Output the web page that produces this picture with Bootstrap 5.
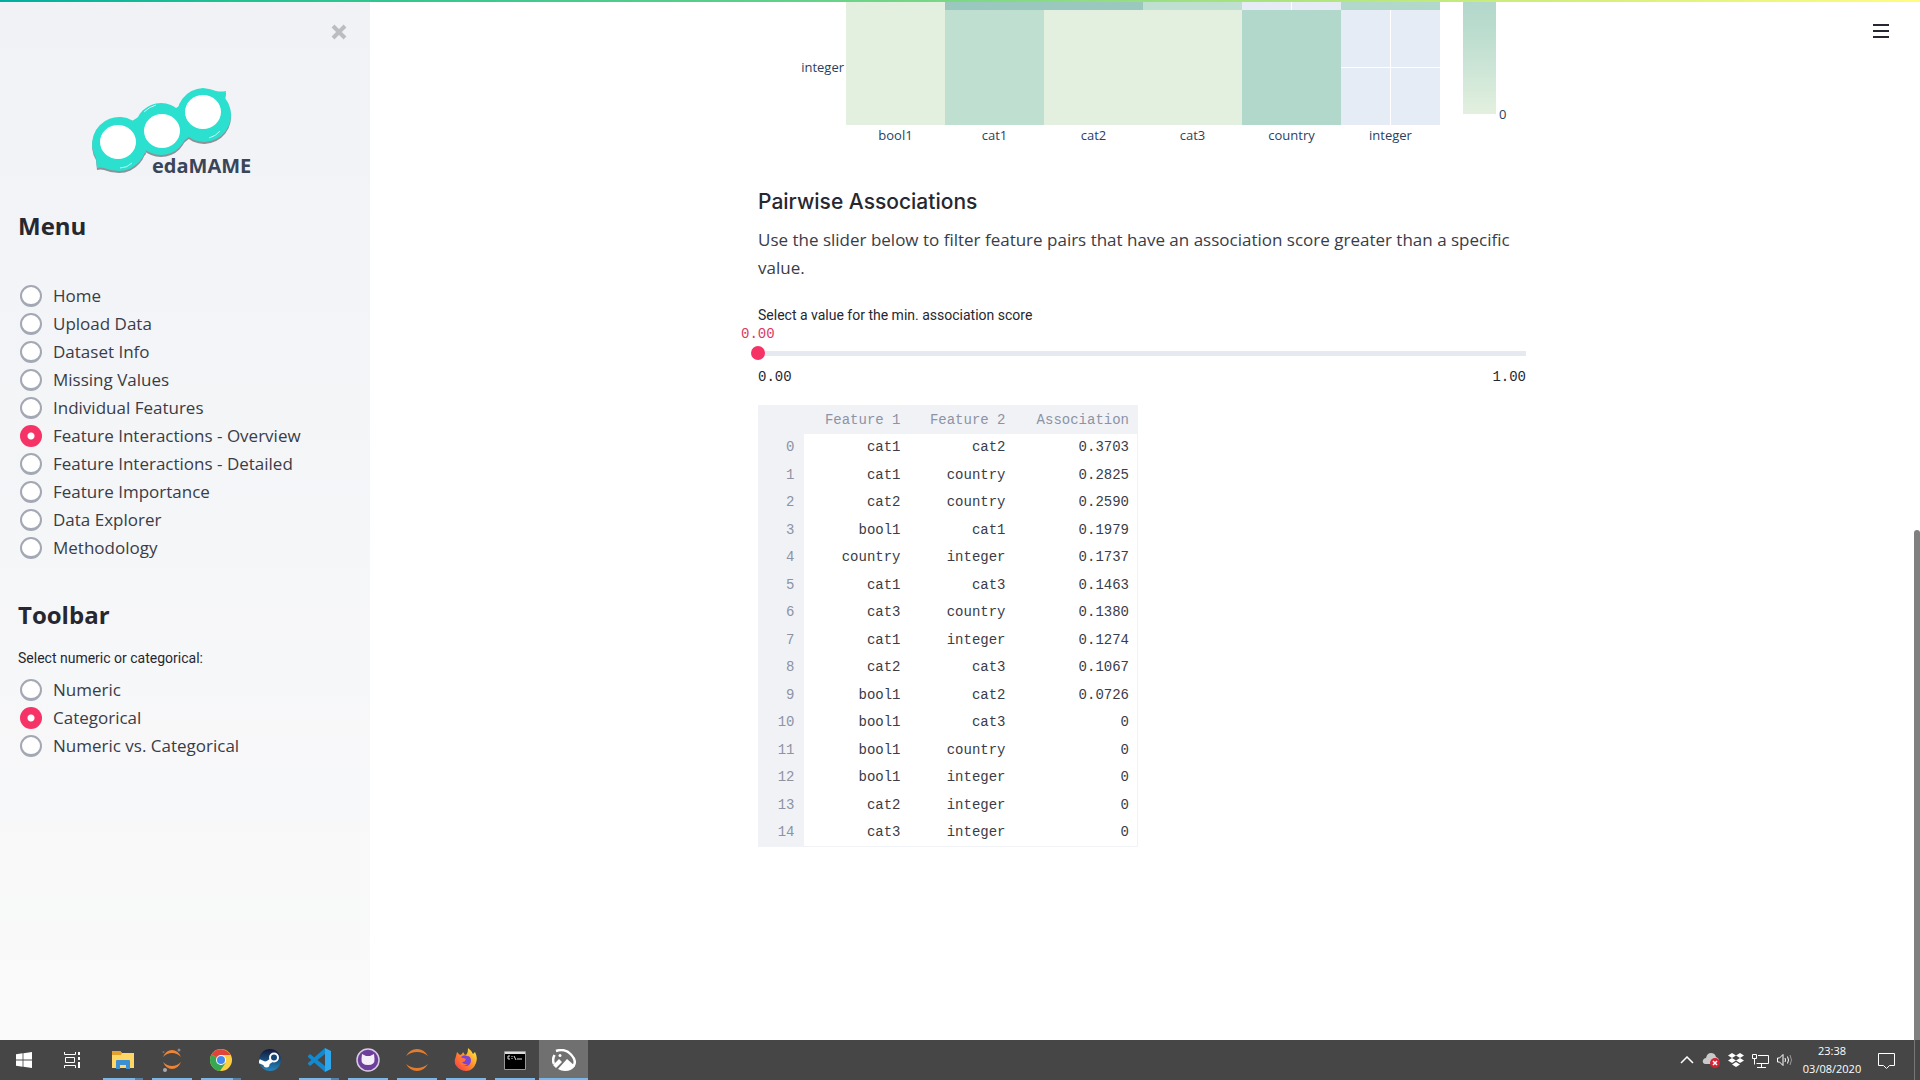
<!DOCTYPE html>
<html lang="en">
<head>
<meta charset="utf-8">
<meta name="viewport" content="width=device-width, initial-scale=1">
<title>edaMAME - Feature Interactions</title>
<link href="https://cdn.jsdelivr.net/npm/bootstrap@5.3.0/dist/css/bootstrap.min.css" rel="stylesheet">
<style>
  :root { --ink: #262730; --soft-ink: #3a3c47; --pink: #f63366; --muted: #8d92a5; --panel: #f0f2f6; }
  body { font-family: "Open Sans", "Noto Sans", sans-serif; font-size: 17px; line-height: 28px; color: var(--ink); background: #fff; }
  .rainbow { height: 2px; z-index: 5; background: linear-gradient(to right, #00aea0, #21c191 12%, #5fd08a 40%, #a5e27f 64%, #d9f17c 84%, #fffd80); }

  /* sidebar */
  .side { width: 370px; background: linear-gradient(#f0f2f6, #fafafa); padding: 24px 18px; }
  .side h1 { font-size: 24px; line-height: 32px; font-weight: 700; }
  .side-close { width: 16px; height: 16px; margin-right: 5px; }
  .logo { width: 160px; height: 88px; margin: 48px 0 34px 74px; }
  .tick-list { padding-left: 2px; }
  .tick-list label { color: var(--soft-ink); padding-left: 11px; }
  .tick { appearance: none; width: 22px; height: 22px; border-radius: 50%; background: #fff; border: 2px solid #a3a8b4; border-bottom-width: 3px; flex: none; }
  .tick:checked { border: 0; background: radial-gradient(circle, #fff 3px, var(--pink) 4px); }
  .note-label { font-family: Roboto, "Open Sans", sans-serif; font-size: 14px; line-height: 20px; }
  #pages { margin-top: 40px; }
  .tool-head { margin: 37px 0 17px; }
  #kinds { margin-top: 8px; }

  /* page column */
  .col-main { max-width: 768px; }
  .chart { font-size: 13px; line-height: 20px; color: #2a3f5f; }
  .chart-y { width: 88px; padding: 57px 2px 0 0; }
  .heat { display: grid; grid-template-columns: repeat(6, 1fr); grid-template-rows: 10px 115px; }
  .v0 { background: #e3f0df; }
  .v1 { background: #bfdfd0; }
  .v2 { background: #b2d7cb; }
  .v3 { background: #9ac8bf; }
  .vn { background: linear-gradient(#fff, #fff) center / 1px 100% no-repeat #e5ecf6; }
  .vx { background: linear-gradient(#fff, #fff) center / 1px 100% no-repeat, linear-gradient(#fff, #fff) center / 100% 1px no-repeat #e5ecf6; }
  .scale { width: 33px; height: 114px; margin-left: 23px; background: linear-gradient(#b2d7cb, #bcddcf 30%, #e3f0df); }
  .scale-zero { width: 30px; padding: 104px 0 0 3px; }
  .col-main h3 { font-family: Inter, "Open Sans", sans-serif; font-size: 21px; line-height: 28px; font-weight: 500; }
  .pair-head { margin: 43px 0 10px; }
  .pair-text { margin: 0 0 23px; color: var(--soft-ink); }
  .limits { margin: 4px 0 18px; }
  .code-text { font-family: "Liberation Mono", monospace; font-size: 14px; line-height: 20px; }
  .thumb-value { color: #d83a63; margin-left: -17px; line-height: 18px; }
  .slide { appearance: none; display: block; height: 20px; width: calc(100% + 14px); margin: 0 -7px;
    background: linear-gradient(#e6eaf0, #e6eaf0) center / calc(100% - 14px) 5px no-repeat; }
  .slide::-webkit-slider-thumb { appearance: none; width: 14px; height: 14px; border-radius: 50%; background: var(--pink); }
  .frame-table { width: 380px; height: 442px; table-layout: fixed; text-align: right; border: 1px solid var(--panel); }
  .frame-table thead tr { height: 28px; }
  .frame-table th, .frame-table td { padding: 0 9px; font-weight: 400; }
  .frame-table th { background: var(--panel); color: var(--muted); }
  .frame-table td { color: var(--soft-ink); }
  .frame-table th:last-child, .frame-table td:last-child { padding-right: 8px; }
  .menu-btn { width: 16px; top: 23px; right: 25px; }
  .menu-btn svg { display: block; }
  .rail { width: 6px; }
  .rail div { height: 49%; border-radius: 3px 3px 0 0; background: #808080; }

  /* taskbar */
  .taskbar { height: 40px; background: #464646; }
  .task { width: 49px; padding: 0; border: 0; background: none; display: flex; align-items: center; justify-content: center; }
  .task.sys { width: 48px; }
  .pinned { margin-left: 2px; }
  .task.run { background: linear-gradient(#76b9ed, #76b9ed) bottom center / 40px 2px no-repeat; }
  .task.many { background: linear-gradient(to right, #76b9ed 80%, #5583a8 80%) bottom center / 40px 2px no-repeat; }
  .task.now { background: linear-gradient(#76b9ed, #76b9ed) bottom / 100% 2px no-repeat #707070; }
  .clock { font-size: 11px; line-height: 18px; color: #fff; text-align: center; width: 60px; }
  .tray svg { flex: none; }
  .peek { width: 6px; border-left: 1px solid #777; margin-left: 11px; }
</style>
</head>
<body class="vh-100 d-flex flex-column overflow-hidden">
<div class="rainbow fixed-top"></div>
<div class="d-flex flex-grow-1 overflow-hidden">
  <aside class="side flex-shrink-0">
    <div class="d-flex justify-content-end">
      <button class="side-close p-0 border-0 bg-transparent d-flex" aria-label="Close sidebar"><svg width="16" height="16" viewBox="0 0 16 16"><path d="M2 2l12 12M14 2L2 14" stroke="#bcbdc1" stroke-width="4"/></svg></button>
    </div>
    <svg class="logo d-block overflow-visible" viewBox="92 88 160 88">
      <defs><g id="pod">
        <path d="M97 168L96 158A27 27 0 1 1 119 171Q111 171 104 168Q100 167 97 168z"/>
        <circle cx="161" cy="129" r="26"/>
        <path d="M226 91L225 98A27 27 0 1 1 203 88Q211 89 216 91Q221 92 226 91z"/>
        <path d="M132 121L140 116L146 152L138 160zM176 108L184 103L190 136L180 144z"/>
      </g></defs>
      <use href="#pod" fill="#8d9299" y="2"/>
      <use href="#pod" fill="#2be0cf"/>
      <g fill="#fff"><ellipse cx="118" cy="142" rx="18" ry="17"/><ellipse cx="162" cy="131" rx="18" ry="17"/><ellipse cx="203" cy="112" rx="18" ry="17"/></g>
      <path d="M144 112Q149 107 156 105M120 168Q127 168 132 163M209 138Q216 136 220 131" fill="none" stroke="#c9fbf4" stroke-width="1"/>
      <text x="152" y="173" font-family="Open Sans, sans-serif" font-weight="700" font-size="20" fill="#3a4558">edaMAME</text>
    </svg>
    <h1 class="mb-0">Menu</h1>
    <div class="tick-list" role="radiogroup" aria-label="Menu" id="pages"></div>
    <h1 class="tool-head">Toolbar</h1>
    <div class="note-label" id="kindLabel">Select numeric or categorical:</div>
    <div class="tick-list" role="radiogroup" aria-labelledby="kindLabel" id="kinds"></div>
  </aside>

  <main class="flex-grow-1 position-relative overflow-hidden">
    <div class="col-main mx-auto">
      <div class="chart d-flex">
        <div class="chart-y text-end">integer</div>
        <div class="flex-grow-1">
          <div class="heat">
            <div class="v0"></div><div class="v3"></div><div class="v3"></div><div class="v1"></div><div class="vn"></div><div class="v2"></div>
            <div class="v0"></div><div class="v1"></div><div class="v0"></div><div class="v0"></div><div class="v2"></div><div class="vx"></div>
          </div>
          <div class="d-flex text-center">
            <div class="w-100">bool1</div><div class="w-100">cat1</div><div class="w-100">cat2</div><div class="w-100">cat3</div><div class="w-100">country</div><div class="w-100">integer</div>
          </div>
        </div>
        <div class="scale"></div>
        <div class="scale-zero">0</div>
      </div>
      <h3 class="pair-head">Pairwise Associations</h3>
      <p class="pair-text">Use the slider below to filter feature pairs that have an association score greater than a specific value.</p>
      <label class="note-label d-block" for="minScore">Select a value for the min. association score</label>
      <div class="thumb-value code-text">0.00</div>
      <input class="slide" type="range" id="minScore" min="0" max="1" step="0.01" value="0">
      <div class="limits code-text d-flex justify-content-between"><span>0.00</span><span>1.00</span></div>
      <table class="frame-table code-text">
        <colgroup><col style="width:45px"><col style="width:106px"><col style="width:105px"><col></colgroup>
        <thead><tr><th></th><th scope="col">Feature 1</th><th scope="col">Feature 2</th><th scope="col">Association</th></tr></thead>
        <tbody id="pairs"></tbody>
      </table>
    </div>
    <button class="menu-btn position-absolute p-0 border-0 bg-transparent" aria-label="Main menu"><svg width="16" height="16" viewBox="0 0 16 16"><path d="M0 2h16M0 8h16M0 14h16" stroke="#262730" stroke-width="2"/></svg></button>
  </main>
  <div class="rail d-flex flex-column justify-content-end"><div></div></div>
</div>

<footer class="taskbar flex-shrink-0 d-flex">
  <button class="task sys" aria-label="Start"><svg width="16" height="16" viewBox="0 0 16 16" fill="#fff"><path d="M0 2.300L6.600 1.300V7.500H0zM7.400 1.200L16 0V7.500H7.400zM0 8.400H6.600V14.700L0 13.700zM7.400 8.400H16V16L7.400 14.800z"/></svg></button>
  <button class="task sys" aria-label="Task view"><svg width="17" height="16" viewBox="0 0 17 16" fill="none" stroke="#fff"><path d="M.5 0v2.500h11V0M.5 16v-2.500h11V16M1.500 5.500h9v5h-9z"/><path d="M15 0v3M15 5v3M15 10v6" stroke-width="2"/></svg></button>
  <div class="pinned d-flex">
    <button class="task many" aria-label="File Explorer"><svg width="22" height="20" viewBox="0 0 22 20"><path d="M0 1h8l2 2h12v15H0z" fill="#ffd766"/><path d="M0 1h8l2 2-1 2H0z" fill="#e4a12e"/><path d="M4 19v-8q0-1 1-1h12q1 0 1 1v8h-4v-4H8v4z" fill="#3c8fd1"/></svg></button>
    <button class="task run" aria-label="Jupyter Notebook"><svg width="20" height="24" viewBox="0 0 20 24"><path d="M1 9Q4 2 10 2t9 7q-4-4-9-4T1 9zM1 14q3 7 9 7t9-7q-4 4-9 4t-9-4z" fill="#ee8434"/><circle cx="17" cy="2" r="1.500" fill="#888"/><circle cx="3" cy="22" r="2" fill="#aaa"/><circle cx="1.500" cy="4" r="1" fill="#777"/></svg></button>
    <button class="task many" aria-label="Chrome"><svg width="22" height="22" viewBox="0 0 22 22"><circle cx="11" cy="11" r="11" fill="#fbcf3f"/><path d="M11 11L1.500 5.500A11 11 0 0 0 10 22L15.500 14z" fill="#36a852"/><path d="M11 11L1.500 5.500A11 11 0 0 1 20.500 6H11z" fill="#e0453a"/><circle cx="11" cy="11" r="5" fill="#fff"/><circle cx="11" cy="11" r="4" fill="#4688f1"/></svg></button>
    <button class="task" aria-label="Steam"><svg width="22" height="22" viewBox="0 0 22 22"><defs><linearGradient id="steam" x2="0" y2="1"><stop stop-color="#11183a"/><stop offset="1" stop-color="#2386c0"/></linearGradient></defs><circle cx="11" cy="11" r="11" fill="url(#steam)"/><path d="M0 12l7 3 6-4" fill="none" stroke="#fff" stroke-width="4"/><circle cx="7.500" cy="15.500" r="3" fill="#fff"/><circle cx="15" cy="8.500" r="4" fill="#174575" stroke="#fff" stroke-width="2"/></svg></button>
    <button class="task many" aria-label="Visual Studio Code"><svg width="24" height="24" viewBox="0 0 24 24"><path d="M18 0l6 3v18l-6 3z" fill="#2fa8ee"/><path d="M1 8l2-2 15 12v6L1 9z" fill="#1389cf"/><path d="M1 16l2 2L18 6V0L1 15z" fill="#1389cf"/></svg></button>
    <button class="task run" aria-label="GitHub Desktop"><svg width="24" height="24" viewBox="0 0 24 24"><circle cx="12" cy="12" r="11" fill="#6e3f9a" stroke="#d8cbe6" stroke-width="1.500"/><path d="M6 6l4 2h4l4-2 .5 5q.5 6-6.500 6t-6.500-6z" fill="#f4eef9"/></svg></button>
    <button class="task run" aria-label="Jupyter Lab"><svg width="22" height="24" viewBox="0 0 22 24"><path d="M0 8Q4 1 11 1t11 7q-5-4-11-4T0 8zM0 16q4 7 11 7t11-7q-5 4-11 4T0 16z" fill="#e47b2d"/></svg></button>
    <button class="task run" aria-label="Firefox"><svg width="24" height="24" viewBox="0 0 24 24"><defs><linearGradient id="fox" x1="1" x2="0" y2="1"><stop offset=".1" stop-color="#ffe53b"/><stop offset=".5" stop-color="#ff8a2a"/><stop offset="1" stop-color="#f8304f"/></linearGradient></defs><path d="M2 8l1-4 3 3 2-1 1-2 2 3q3 0 3-7 4 3 5 6l2-2q3 6 1 11-3 8-10 8T1 16q-1-4 1-8z" fill="url(#fox)"/><path d="M7 9q3-3 6-1 4 0 4 5-1 5-5 5t-5-4l4-1z" fill="#7a45d6"/><path d="M5 10q3-1 7 1-1 3-4 3 2 3 6 2-5 4-8-1z" fill="#ff7139"/></svg></button>
    <button class="task run" aria-label="Command Prompt"><svg width="22" height="19" viewBox="0 0 22 19"><path d="M.5.5h21v18H.5z" fill="#000" stroke="#999"/><path d="M1 2h20" stroke="#ddd" stroke-width="2"/><path d="M6 5H4v3h2M8 5v1M8 7v1M10 5l2 4M13 8h5" stroke="#ddd" fill="none"/></svg></button>
    <button class="task now" aria-label="Photos"><svg width="24" height="22" viewBox="0 0 24 22"><path d="M4 2Q13-1 19 5.500T21.500 17M2.500 6Q0 11 2 15" fill="none" stroke="#fff" stroke-width="2.500"/><path d="M1 16l6-6 3 3-6 6zM6 20l9-10 8 7q-3 5-10 5-4 0-7-2z" fill="#fff"/><circle cx="8" cy="6.500" r="1.500" fill="#fff"/></svg></button>
  </div>

  <div class="tray d-flex align-items-center ms-auto gap-2">
    <svg width="14" height="8" viewBox="0 0 14 8"><path d="M1 7l6-6 6 6" fill="none" stroke="#fff" stroke-width="1.500"/></svg>
    <svg width="18" height="16" viewBox="0 0 18 16"><path d="M3 12q-3-1-2-4 1-2 3-2 1-5 5-5 4 0 5 4 3 1 3 4v3z" fill="#c9c9c9"/><circle cx="13" cy="11" r="5" fill="#d42333"/><path d="M11 9l4 4M15 9l-4 4" stroke="#fff" stroke-width="1.500"/></svg>
    <svg width="16" height="15" viewBox="0 0 16 15" fill="#fff"><path d="M4 0l4 2.500L4 5 0 2.500zM12 0l4 2.500L12 5 8 2.500zM4 5l4 2.500L4 10 0 7.500zM12 5l4 2.500L12 10 8 7.500zM8 9l4 2.500L8 14l-4-2.500z"/></svg>
    <svg width="17" height="15" viewBox="0 0 17 15" fill="none" stroke="#fff"><path d="M6 2.500h10.500v8H4.500M9.500 11v3M5 14.500h9M.5 1.500h4v4h-4zM2.500 5.500v6"/></svg>
    <svg width="17" height="14" viewBox="0 0 17 14" fill="none" stroke="#fff"><path d="M.5 5h2L6 1.500v11L2.500 9h-2zM8 5q1 2 0 4M10.500 3.500q2 3.500 0 7"/><path d="M13 2q3 5 0 10" stroke="#999"/></svg>
    <div class="clock text-nowrap">23:38<br>03/08/2020</div>
    <svg class="ms-2" width="17" height="17" viewBox="0 0 17 17" fill="none" stroke="#fff"><path d="M.5 1.500h16v12h-5l-3 3-3-3h-5z"/></svg>
    <div class="peek align-self-stretch"></div>
  </div>
</footer>

<script>
  function ticks(id, names, chosen) {
    document.getElementById(id).innerHTML = names.map((name, i) =>
      `<div class="d-flex align-items-center"><input class="tick" type="radio" name="${id}" id="${id}${i}"${i === chosen ? ' checked' : ''}><label class="flex-grow-1" for="${id}${i}">${name}</label></div>`).join('');
  }
  ticks('pages', ['Home', 'Upload Data', 'Dataset Info', 'Missing Values', 'Individual Features', 'Feature Interactions - Overview', 'Feature Interactions - Detailed', 'Feature Importance', 'Data Explorer', 'Methodology'], 5);
  ticks('kinds', ['Numeric', 'Categorical', 'Numeric vs. Categorical'], 1);

  const pairs = [['cat1', 'cat2', '0.3703'], ['cat1', 'country', '0.2825'], ['cat2', 'country', '0.2590'], ['bool1', 'cat1', '0.1979'], ['country', 'integer', '0.1737'], ['cat1', 'cat3', '0.1463'], ['cat3', 'country', '0.1380'], ['cat1', 'integer', '0.1274'], ['cat2', 'cat3', '0.1067'], ['bool1', 'cat2', '0.0726'], ['bool1', 'cat3', '0'], ['bool1', 'country', '0'], ['bool1', 'integer', '0'], ['cat2', 'integer', '0'], ['cat3', 'integer', '0']];
  document.getElementById('pairs').innerHTML = pairs.map((p, i) =>
    `<tr><th scope="row">${i}</th>${p.map(v => `<td>${v}</td>`).join('')}</tr>`).join('');
</script>
<script src="https://cdn.jsdelivr.net/npm/bootstrap@5.3.0/dist/js/bootstrap.bundle.min.js"></script>
</body>
</html>
